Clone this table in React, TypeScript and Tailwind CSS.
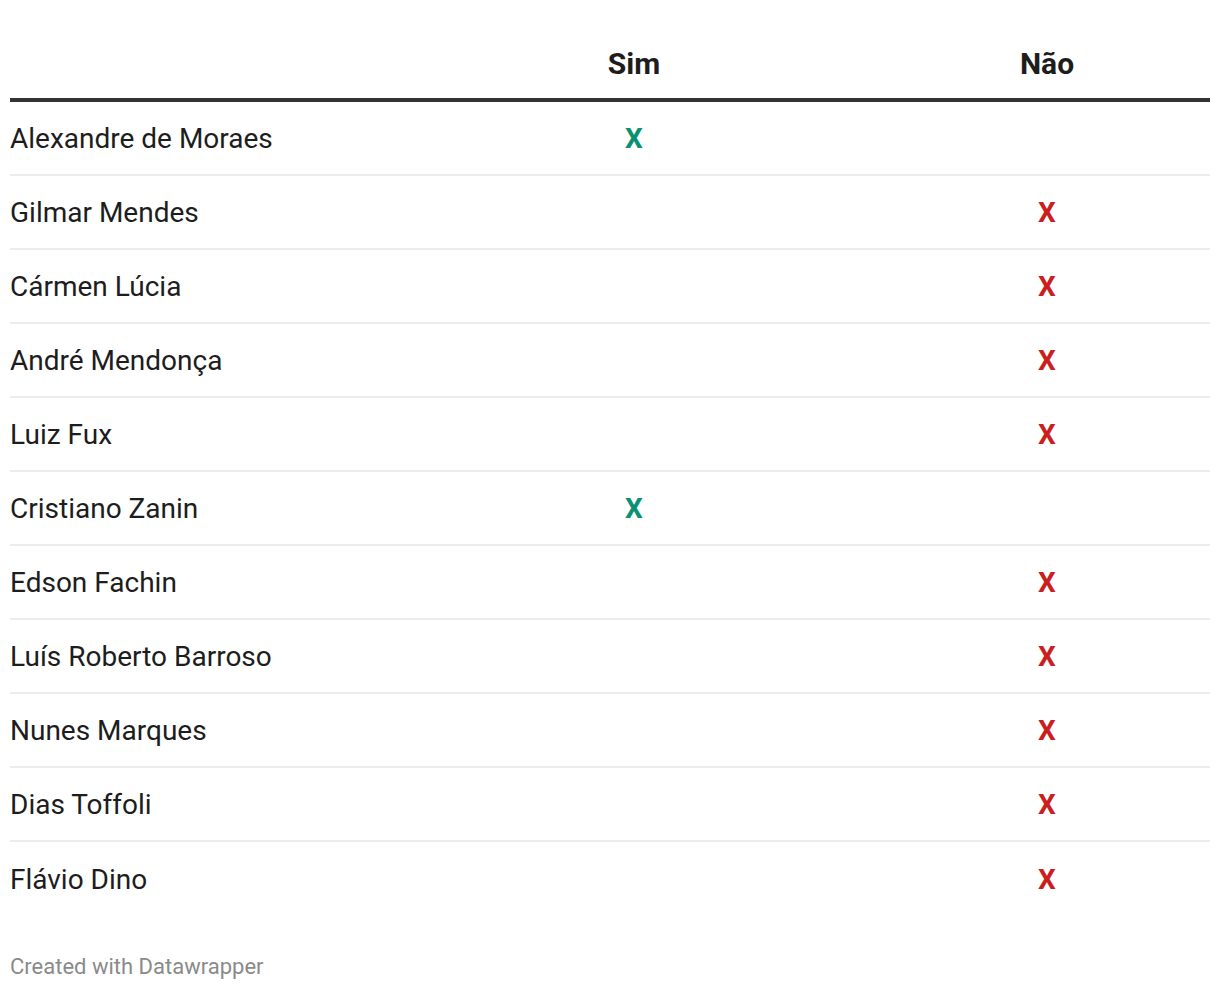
import React from "react";

const rows: [string, "sim" | "nao"][] = [
  ["Alexandre de Moraes", "sim"],
  ["Gilmar Mendes", "nao"],
  ["Cármen Lúcia", "nao"],
  ["André Mendonça", "nao"],
  ["Luiz Fux", "nao"],
  ["Cristiano Zanin", "sim"],
  ["Edson Fachin", "nao"],
  ["Luís Roberto Barroso", "nao"],
  ["Nunes Marques", "nao"],
  ["Dias Toffoli", "nao"],
  ["Flávio Dino", "nao"],
];

export default function App() {
  return (
    <div className="w-[1220px] h-[990px] bg-white px-[10px]" style={{ fontFamily: "Roboto, 'Liberation Sans', sans-serif" }}>
      <div className="grid grid-cols-[374px_500px_326px] h-[102px] items-end pb-[19px] border-b-[4px] border-[#333333] text-[30px] font-bold text-[#1d1d1d] leading-none">
        <div></div>
        <div className="text-center">Sim</div>
        <div className="text-center">Não</div>
      </div>
      {rows.map(([name, v], i) => (
        <div
          key={name}
          className={`grid grid-cols-[374px_500px_326px] items-center pt-[2px] text-[28px] text-[#1d1d1d] ${i < rows.length - 1 ? "h-[74px] border-b-2 border-[#ececec]" : "h-[74px]"}`}
        >
          <div>{name}</div>
          <div className="text-center font-bold text-[#0a9174]">{v === "sim" ? "X" : ""}</div>
          <div className="text-center font-bold text-[#cb1f1f]">{v === "nao" ? "X" : ""}</div>
        </div>
      ))}
      <div className="mt-[40px] text-[22px] text-[#8a8a8a] leading-none">Created with Datawrapper</div>
    </div>
  );
}
